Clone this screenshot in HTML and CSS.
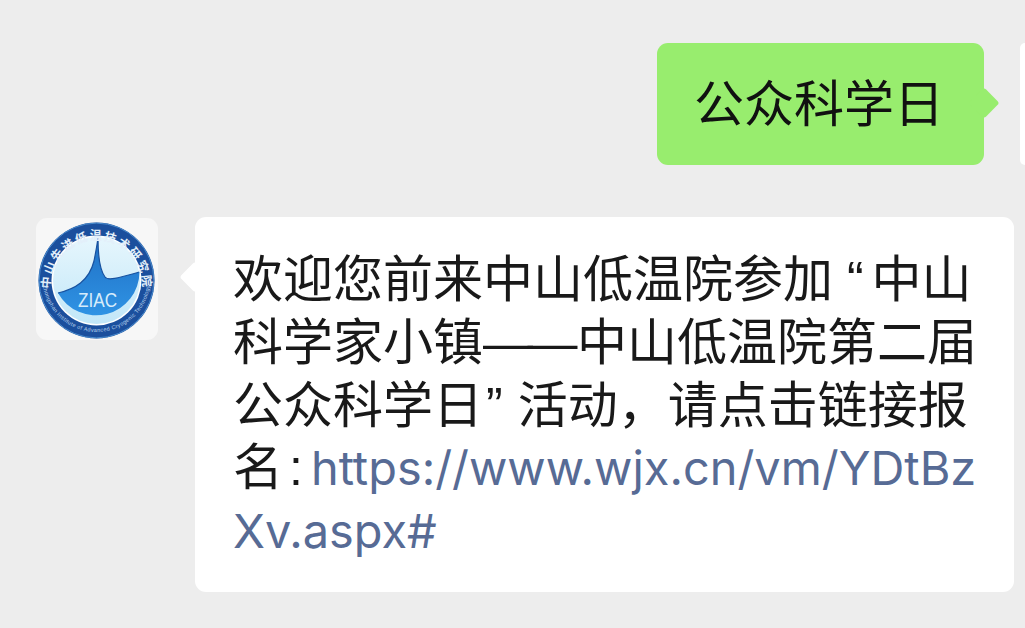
FILE: index.html
```html
<!DOCTYPE html>
<html lang="zh-CN">
<head>
  <meta charset="UTF-8" />
  <meta name="viewport" content="width=device-width, initial-scale=1.0"/>
  <title>公众科学日</title>
  <link rel="stylesheet" href="styles.css">
</head>
<body>
  <div class="chat">

    <div class="row row-out">
      <div class="bubble bubble-out">公众科学日</div>
      <div class="avatar-me"></div>
    </div>

    <div class="row row-in">
      <div class="avatar">
        <svg class="logo" viewBox="0 0 122 122" aria-label="ZIAC">
          <defs>
            <linearGradient id="sky" x1="0" y1="0" x2="0" y2="1">
              <stop offset="0" stop-color="#e6f6fd"/>
              <stop offset="1" stop-color="#c2e7f8"/>
            </linearGradient>
            <linearGradient id="water" x1="0" y1="0" x2="0" y2="1">
              <stop offset="0" stop-color="#1f6fc4"/>
              <stop offset="1" stop-color="#2f93e4"/>
            </linearGradient>
            <path id="arc-top" d="M14.5 68 A46 46 0 1 1 106.5 68"/>
            <path id="arc-bottom" d="M6.5 60 A54 54 0 0 0 114.5 60"/>
          </defs>
          <circle cx="60.5" cy="62.5" r="58" fill="#1b4f9d"/>
          <circle cx="60.5" cy="62.5" r="57.4" fill="none" stroke="#4a8ccd" stroke-width="1"/>
          <circle cx="60.5" cy="62.5" r="45" fill="#fff"/>
          <circle cx="60.5" cy="62.5" r="43.5" fill="url(#sky)"/>
          <path d="M22 75 C39 71 53 63 58 43 C60 33 61 27 62 20 C62 33 63 51 69 59 C72 63 82 60 103.5 54 A43.5 43.5 0 0 1 22 75 Z" fill="url(#water)"/>
          <path d="M22 75 C39 71 53 63 58 43 C60 33 61 27 62 20 C62 33 63 51 69 59 C72 63 82 60 103.5 54" fill="none" stroke="#17519f" stroke-width="1.2"/>
          <text class="logo-name" x="42" y="89" textLength="39" lengthAdjust="spacingAndGlyphs">ZIAC</text>
          <text class="logo-cn"><textPath href="#arc-top" startOffset="50%" text-anchor="middle">中山先进低温技术研究院</textPath></text>
          <text class="logo-en"><textPath href="#arc-bottom" startOffset="50%" text-anchor="middle">Zhongshan Institute of Advanced Cryogenic Technology</textPath></text>
        </svg>
      </div>
      <div class="bubble bubble-in">
        欢迎您前来中山低温院参加 <span class="quote-start">“</span>中山<br>
        科学家小镇<span class="dash">——</span>中山低温院第二届<br>
        公众科学日<span class="quote-end">”</span>活动，请点击链接报<br>
        名<span class="colon">:</span><a class="link" href="#">https://www.wjx.cn/vm/YDtBz<br>Xv.aspx#</a>
      </div>
    </div>

  </div>
</body>
</html>
```

FILE: styles.css
```css
html, body {
  height: 100%;
}

body {
  margin: 0;
  background-color: #ededed;
  font-family: "Liberation Sans", "Noto Sans CJK SC", sans-serif;
  color: #191919;
  overflow: hidden;
}

.chat {
  display: flex;
  flex-direction: column;
  gap: 52px;
  padding-top: 43px;
}

.row {
  display: flex;
  align-items: flex-start;
}

.row-out {
  justify-content: flex-end;
  gap: 36px;
}

.row-in {
  padding-left: 36px;
  gap: 37px;
}

.avatar {
  width: 122px;
  height: 122px;
  flex: none;
  margin-top: 1px;
  background-color: #f7f7f7;
  border-radius: 11px;
  display: flex;
}

.avatar-me {
  width: 5px;
  height: 122px;
  background-color: #fff;
  border-radius: 11px 0 0 11px;
}

.logo {
  width: 122px;
  height: 122px;
}

.logo-name {
  font-size: 20px;
  fill: #d6ecfb;
}

.logo-cn {
  font-size: 12px;
  font-weight: bold;
  letter-spacing: 1.6px;
  fill: #e3effa;
  font-family: "Noto Sans CJK SC", sans-serif;
}

.logo-en {
  font-size: 5.5px;
  letter-spacing: 0.35px;
  fill: #bcd6ef;
}

.bubble {
  position: relative;
  border-radius: 11px;
  box-sizing: border-box;
}

/* little tail, a rotated square half hidden behind the bubble */
.bubble::before {
  content: "";
  position: absolute;
  top: 49px;
  width: 22px;
  height: 22px;
  border-radius: 3px;
  transform: rotate(45deg);
}

.bubble-out {
  width: 327px;
  height: 122px;
  padding-right: 3px;
  background-color: #98ed6e;
  font-size: 50px;
  line-height: 124px;
  text-align: center;
  color: #111;
}

.bubble-out::before {
  right: -11px;
  background-color: #98ed6e;
}

.bubble-in {
  width: 819px;
  height: 375px;
  padding: 32px 20px 0 38px;
  background-color: #fff;
  font-size: 50px;
  line-height: 62.8px;
  white-space: nowrap;
}

.bubble-in::before {
  left: -11px;
  background-color: #fff;
}

.dash {
  letter-spacing: -5.5px;
  margin-right: 5px;
}

.quote-start {
  margin-right: 8px;
}

.quote-end {
  margin: 0 15px 0 3px;
}

.colon {
  margin: 0 8px 0 6px;
}

.link {
  font-family: Inter, "Liberation Sans", sans-serif;
  font-size: 46.9px;
  color: #576b95;
  text-decoration: none;
}
```
